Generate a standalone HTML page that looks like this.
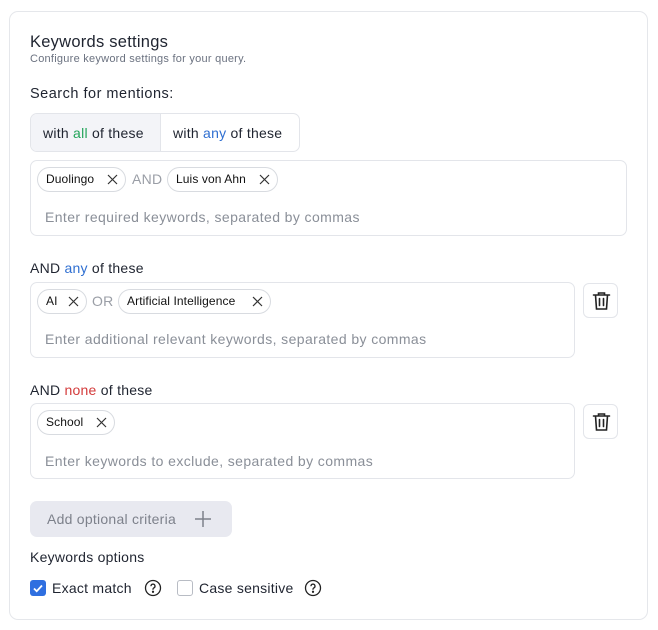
<!DOCTYPE html>
<html><head><style>
*{box-sizing:border-box;margin:0;padding:0}
body{width:658px;height:630px;background:#fff;font-family:"Liberation Sans",sans-serif;color:#1f2430;position:relative;overflow:hidden;letter-spacing:0.25px}
.card{position:absolute;left:9px;top:11px;width:639px;height:609px;border:1px solid #e5e7eb;border-radius:9px}
.abs{position:absolute;white-space:nowrap}
.box{position:absolute;border:1px solid #e3e5ea;border-radius:7px}
.chip{position:absolute;height:25px;border:1px solid #d8dbe0;border-radius:13px;font-size:12px;line-height:23px;padding-left:8px;color:#111;letter-spacing:0.1px}
.chip svg{position:absolute;right:7px;top:6px}
.ph{position:absolute;left:14px;font-size:14px;color:#8a8f98;letter-spacing:0.4px}
.op{position:absolute;font-size:14px;color:#9a9ea6;line-height:25px}
.trash{position:absolute;width:35px;height:35px;border:1px solid #e3e5ea;border-radius:6px}
.lbl{font-size:14px;color:#1f2430}
</style></head><body>
<div class="card"></div>
<div class="abs" style="left:30px;top:33px;font-size:16.5px;color:#1f2430">Keywords settings</div>
<div class="abs" style="left:30px;top:53px;font-size:11px;color:#6b7280">Configure keyword settings for your query.</div>
<div class="abs" style="left:30px;top:86px;font-size:14.5px;letter-spacing:0.5px">Search for mentions:</div>
<div class="box" style="left:30px;top:113px;width:270px;height:39px;overflow:hidden">
<div style="position:absolute;left:0;top:0;width:130px;height:39px;background:#f3f4f8;border-right:1px solid #e3e5ea"></div>
<div class="abs lbl" style="left:12px;top:11px">with <span style="color:#22a45a">all</span> of these</div>
<div class="abs lbl" style="left:142px;top:11px">with <span style="color:#2f6fd1">any</span> of these</div>
</div>
<div class="box" style="left:30px;top:160px;width:597px;height:76px">
<div class="chip" style="left:6px;top:6px;width:89px">Duolingo<svg width="11" height="11" viewBox="0 0 11 11" stroke="#333" stroke-width="1.2"><path d="M1 1l9 9M10 1l-9 9"/></svg></div>
<div class="op" style="left:101px;top:6px">AND</div>
<div class="chip" style="left:136px;top:6px;width:111px">Luis von Ahn<svg width="11" height="11" viewBox="0 0 11 11" stroke="#333" stroke-width="1.2"><path d="M1 1l9 9M10 1l-9 9"/></svg></div>
<div class="ph" style="top:48px">Enter required keywords, separated by commas</div>
</div>
<div class="abs lbl" style="left:30px;top:260px">AND <span style="color:#2f6fd1">any</span> of these</div>
<div class="box" style="left:30px;top:282px;width:545px;height:76px">
<div class="chip" style="left:6px;top:6px;width:50px">AI<svg width="11" height="11" viewBox="0 0 11 11" stroke="#333" stroke-width="1.2"><path d="M1 1l9 9M10 1l-9 9"/></svg></div>
<div class="op" style="left:61px;top:6px">OR</div>
<div class="chip" style="left:87px;top:6px;width:153px">Artificial Intelligence<svg width="11" height="11" viewBox="0 0 11 11" stroke="#333" stroke-width="1.2"><path d="M1 1l9 9M10 1l-9 9"/></svg></div>
<div class="ph" style="top:48px">Enter additional relevant keywords, separated by commas</div>
</div>
<div class="trash" style="left:583px;top:283px"><svg width="35" height="35" viewBox="0 0 35 35" fill="none" stroke="#222" stroke-width="1.6" stroke-linecap="round"><path d="M9.5 11h16M14.5 11V9h6v2M11.5 11l1 14h10l1-14M15.5 14.5v7M19.5 14.5v7"/></svg></div>
<div class="abs lbl" style="left:30px;top:382px">AND <span style="color:#d33a3a">none</span> of these</div>
<div class="box" style="left:30px;top:403px;width:545px;height:76px">
<div class="chip" style="left:6px;top:6px;width:78px">School<svg width="11" height="11" viewBox="0 0 11 11" stroke="#333" stroke-width="1.2"><path d="M1 1l9 9M10 1l-9 9"/></svg></div>
<div class="ph" style="top:49px">Enter keywords to exclude, separated by commas</div>
</div>
<div class="trash" style="left:583px;top:404px"><svg width="35" height="35" viewBox="0 0 35 35" fill="none" stroke="#222" stroke-width="1.6" stroke-linecap="round"><path d="M9.5 11h16M14.5 11V9h6v2M11.5 11l1 14h10l1-14M15.5 14.5v7M19.5 14.5v7"/></svg></div>
<div style="position:absolute;left:30px;top:501px;width:202px;height:36px;background:#e8e9f0;border-radius:7px"></div>
<div class="abs" style="left:47px;top:511px;font-size:14px;color:#7d818b">Add optional criteria</div>
<svg class="abs" style="left:193px;top:509px" width="20" height="20" viewBox="0 0 20 20" stroke="#7d818b" stroke-width="1.5"><path d="M10 2v16M2 10h16"/></svg>
<div class="abs lbl" style="left:30px;top:549px">Keywords options</div>
<svg class="abs" style="left:30px;top:580px" width="16" height="16" viewBox="0 0 16 16"><rect width="16" height="16" rx="3" fill="#2f6fe0"/><path d="M4 8.5l2.7 2.7L12 5.5" stroke="#fff" stroke-width="1.8" fill="none"/></svg>
<div class="abs lbl" style="left:52px;top:580px">Exact match</div>
<svg class="abs" style="left:144px;top:579px" width="18" height="18" viewBox="0 0 18 18" fill="none" stroke="#222" stroke-width="1.3"><circle cx="9" cy="9" r="7.5"/><path d="M7 7.2a2 2 0 1 1 2.7 1.8c-.5.3-.7.6-.7 1.2v.5"/><circle cx="9" cy="12.8" r=".5" fill="#222"/></svg>
<div class="abs" style="left:177px;top:580px;width:16px;height:16px;border:1.5px solid #b8bcc4;border-radius:3px"></div>
<div class="abs lbl" style="left:199px;top:580px">Case sensitive</div>
<svg class="abs" style="left:304px;top:579px" width="18" height="18" viewBox="0 0 18 18" fill="none" stroke="#222" stroke-width="1.3"><circle cx="9" cy="9" r="7.5"/><path d="M7 7.2a2 2 0 1 1 2.7 1.8c-.5.3-.7.6-.7 1.2v.5"/><circle cx="9" cy="12.8" r=".5" fill="#222"/></svg>
</body></html>
